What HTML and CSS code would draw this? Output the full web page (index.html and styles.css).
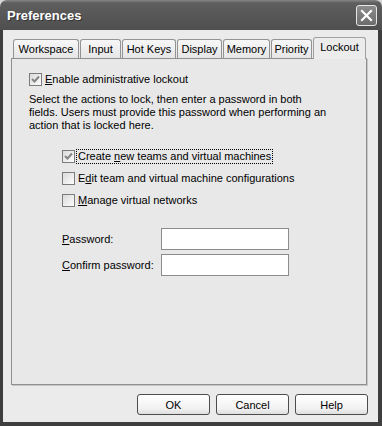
FILE: index.html
```html
<!DOCTYPE html>
<html lang="en">
<head>
    <meta charset="UTF-8">
    <title>Preferences</title>
    <link rel="stylesheet" href="styles.css">
</head>
<body>
    <div class="window">
        <div class="titlebar">
            <span class="title">Preferences</span>
            <button class="close" aria-label="Close">
                <svg width="13" height="13" viewBox="0 0 13 13">
                    <path d="M2 2 L11 11 M11 2 L2 11" stroke="#fff" stroke-width="2.2" stroke-linecap="square"/>
                </svg>
            </button>
        </div>

        <div class="frame">
            <div class="tabs">
                <div class="tab">Workspace</div>
                <div class="tab">Input</div>
                <div class="tab">Hot Keys</div>
                <div class="tab">Display</div>
                <div class="tab">Memory</div>
                <div class="tab">Priority</div>
                <div class="tab active">Lockout</div>
            </div>

            <div class="panel">
                <div class="check">
                    <span class="box checked">
                        <svg width="11" height="11" viewBox="0 0 11 11"><path d="M2 5 L4.5 7.5 L9 2.5" fill="none" stroke="#858585" stroke-width="2"/></svg>
                    </span>
                    <span class="label"><u>E</u>nable administrative lockout</span>
                </div>

                <p class="intro">Select the actions to lock, then enter a password in both<br>fields. Users must provide this password when performing an<br>action that is locked here.</p>

                <div class="options">
                    <div class="check">
                        <span class="box checked">
                            <svg width="11" height="11" viewBox="0 0 11 11"><path d="M2 5 L4.5 7.5 L9 2.5" fill="none" stroke="#858585" stroke-width="2"/></svg>
                        </span>
                        <span class="label focused">Create <u>n</u>ew teams and virtual machines</span>
                    </div>
                    <div class="check">
                        <span class="box"></span>
                        <span class="label">E<u>d</u>it team and virtual machine configurations</span>
                    </div>
                    <div class="check">
                        <span class="box"></span>
                        <span class="label"><u>M</u>anage virtual networks</span>
                    </div>
                </div>

                <div class="fields">
                    <div class="field">
                        <label for="pw"><u>P</u>assword:</label>
                        <input id="pw" type="password">
                    </div>
                    <div class="field">
                        <label for="pw2"><u>C</u>onfirm password:</label>
                        <input id="pw2" type="password">
                    </div>
                </div>
            </div>

            <div class="buttons">
                <button class="btn">OK</button>
                <button class="btn">Cancel</button>
                <button class="btn">Help</button>
            </div>
        </div>
    </div>
</body>
</html>
```

FILE: styles.css
```css
* {
    margin: 0;
    padding: 0;
    box-sizing: border-box;
}

body {
    background: #d6d6d6;
    font-family: "Liberation Sans", Arial, sans-serif;
    font-size: 11px;
    color: #000;
}

.window {
    width: 382px;
    height: 426px;
    display: flex;
    flex-direction: column;
}

.titlebar {
    height: 30px;
    flex: none;
    display: flex;
    align-items: center;
    justify-content: space-between;
    padding: 0 5px 0 7px;
    background: linear-gradient(#858585, #5e5e5e 3px, #575757 50%, #4f4f4f);
    border-radius: 7px 7px 0 0;
}

.title {
    color: #fff;
    font-weight: bold;
    font-size: 13px;
    text-shadow: 1px 1px 0 #333;
}

.close {
    width: 21px;
    height: 21px;
    border: 1px solid #e6e6e6;
    border-radius: 3px;
    background: linear-gradient(#8c8c8c, #6c6c6c);
    display: flex;
    align-items: center;
    justify-content: center;
}

.frame {
    flex: 1;
    display: flex;
    flex-direction: column;
    background: #ebebeb;
    border: solid #3e3e3e;
    border-width: 0 4px 4px 3px;
    padding: 7px 10px 0 8px;
}

.tabs {
    display: flex;
    align-items: flex-end;
    height: 22px;
    padding-left: 2px;
    margin-bottom: -1px;
    position: relative;
    z-index: 1;
}

.tab {
    height: 19px;
    margin: 0 1px 1px 0;
    display: flex;
    align-items: center;
    justify-content: center;
    white-space: nowrap;
    border: 1px solid #939393;
    border-bottom: none;
    border-radius: 3px 3px 0 0;
    background: linear-gradient(#f7f7f7, #e6e6e6);
}

/* tab widths as in the dialog */
.tab:nth-child(1) { width: 66px; }
.tab:nth-child(2) { width: 41px; }
.tab:nth-child(3) { width: 54px; }
.tab:nth-child(4) { width: 45px; }
.tab:nth-child(5) { width: 47px; }
.tab:nth-child(6) { width: 41px; }
.tab:nth-child(7) { width: 53px; }

.tab.active {
    height: 22px;
    margin: 0;
    padding-bottom: 3px;
    background: #ececec;
    border-color: #a0a0a0;
}

.panel {
    flex: 1;
    margin-right: 1px;
    border: 1px solid #8f8f8f;
    background: #e8e8e8;
    box-shadow: 1px 1px 0 #c6c6c6;
    padding: 12px 0 0 17px;
}

.check {
    display: flex;
    align-items: center;
    height: 17px;
    gap: 1px;
}

.box {
    width: 13px;
    height: 13px;
    flex: none;
    border: 1px solid #7c7c7c;
    background: linear-gradient(135deg, #dadada, #fdfdfd);
    display: flex;
    align-items: center;
    justify-content: center;
}

.label {
    border: 1px dotted transparent;
    padding: 0 1px;
    line-height: 13px;
}

.label.focused {
    border-color: #000;
}

.intro {
    margin-top: 5px;
    line-height: 13px;
}

.options {
    margin: 16px 0 0 33px;
    display: flex;
    flex-direction: column;
    gap: 5px;
}

.fields {
    margin: 19px 0 0 33px;
    display: flex;
    flex-direction: column;
    gap: 4px;
}

.field {
    display: flex;
    align-items: center;
    height: 22px;
}

.field label {
    width: 99px;
}

.field input {
    width: 128px;
    height: 22px;
    border: 1px solid #8c8c8c;
    background: #fff;
}

.buttons {
    display: flex;
    justify-content: flex-end;
    gap: 6px;
    margin: 9px 0 7px;
}

.btn {
    width: 73px;
    height: 21px;
    border: 1px solid #4c4c4c;
    border-radius: 3px;
    background: linear-gradient(#ffffff, #f2f2f2 70%, #dedede);
    font-family: "Liberation Sans", Arial, sans-serif;
    font-size: 11px;
    color: #000;
}
```
